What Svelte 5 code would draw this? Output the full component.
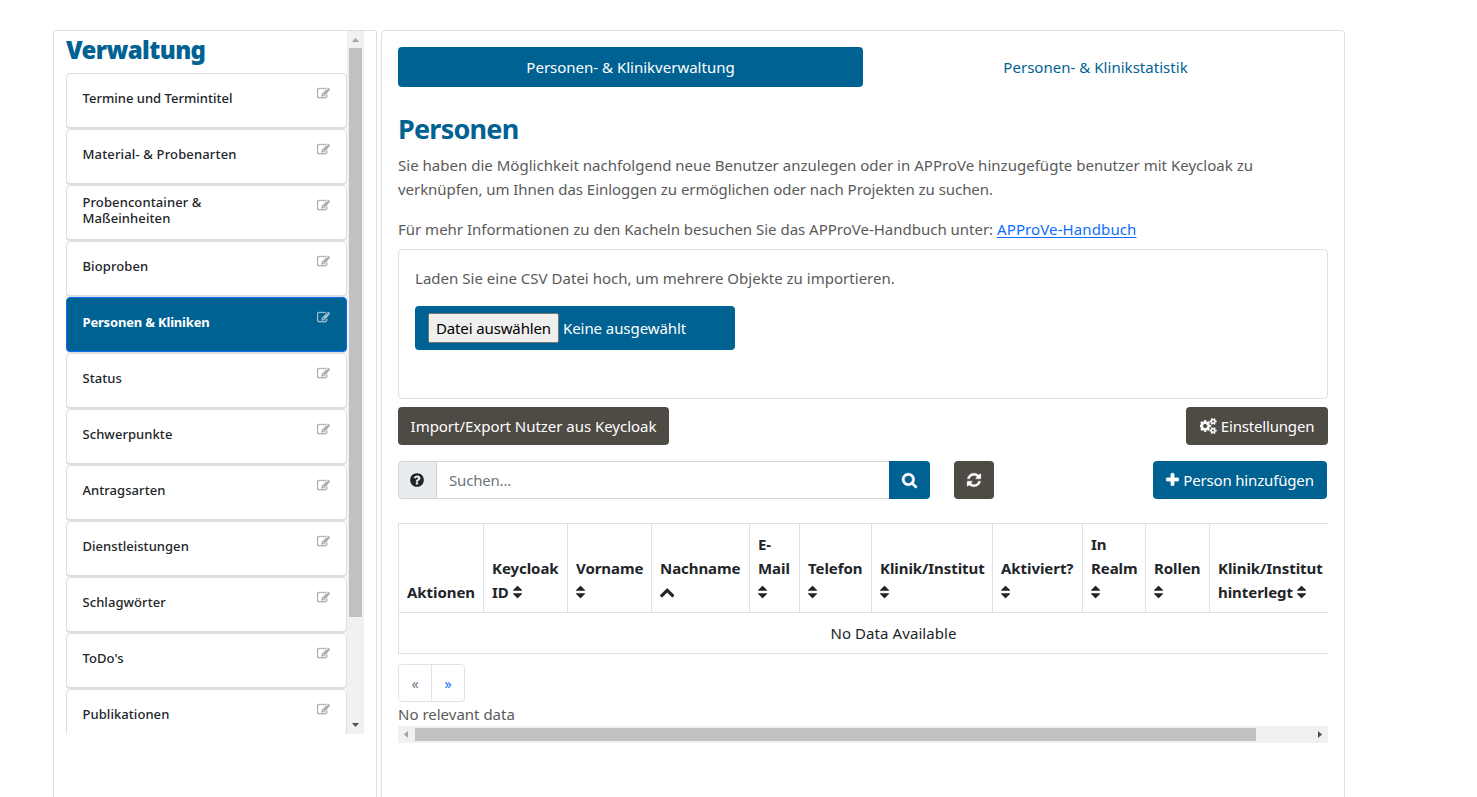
<script>
  const items = [
    { label: 'Termine und Termintitel', ls: 0.01 },
    { label: 'Material- & Probenarten', ls: 0.15 },
    { label: 'Probencontainer & Maßeinheiten', ls: 0.1 },
    { label: 'Bioproben', ls: 0.1 },
    { label: 'Personen & Kliniken', ls: -0.18, active: true },
    { label: 'Status', ls: 0.06 },
    { label: 'Schwerpunkte', ls: 0.06 },
    { label: 'Antragsarten', ls: 0.06 },
    { label: 'Dienstleistungen', ls: 0.04 },
    { label: 'Schlagwörter', ls: 0.06 },
    { label: "ToDo's", ls: 0.06 },
    { label: 'Publikationen', ls: 0.06 },
  ];

  const columns = [
    { lines: ['Aktionen'], width: 85 },
    { lines: ['Keycloak', 'ID'], width: 84, sort: 'both', inline: true },
    { lines: ['Vorname'], width: 84, sort: 'both' },
    { lines: ['Nachname'], width: 98, sort: 'up' },
    { lines: ['E-', 'Mail'], width: 50, sort: 'both' },
    { lines: ['Telefon'], width: 72, sort: 'both' },
    { lines: ['Klinik/Institut'], width: 121, sort: 'both' },
    { lines: ['Aktiviert?'], width: 90, sort: 'both' },
    { lines: ['In', 'Realm'], width: 63, sort: 'both' },
    { lines: ['Rollen'], width: 64, sort: 'both' },
    { lines: ['Klinik/Institut', 'hinterlegt'], width: 122, sort: 'both', inline: true },
    { lines: [], width: 57 },
  ];

  const icons = {
    edit: ['0 0 1792 1792', 'M888 1184l116-116-152-152-116 116v56h96v96h56zm440-720q-16-16-33 1l-350 350q-17 17-1 33t33-1l350-350q17-17 1-33zm80 594v190q0 119-84.5 203.5t-203.5 84.5h-832q-119 0-203.5-84.5t-84.5-203.5v-832q0-119 84.5-203.5t203.5-84.5h832q63 0 117 25 15 7 18 23 3 17-9 29l-49 49q-14 14-32 8-23-6-45-6h-832q-66 0-113 47t-47 113v832q0 66 47 113t113 47h832q66 0 113-47t47-113v-126q0-13 9-22l64-64q15-15 35-7t20 29zm-96-738l288 288-672 672h-288v-288zm444 132l-92 92-288-288 92-92q28-28 68-28t68 28l152 152q28 28 28 68t-28 68z'],
    search: ['64 0 1664 1792', 'M1216 832q0-185-131.5-316.5t-316.5-131.5-316.5 131.5-131.5 316.5 131.5 316.5 316.5 131.5 316.5-131.5 131.5-316.5zm512 832q0 52-38 90t-90 38q-54 0-90-38l-343-342q-179 124-399 124-143 0-273.5-55.5t-225-150-150-225-55.5-273.5 55.5-273.5 150-225 225-150 273.5-55.5 273.5 55.5 225 150 150 225 55.5 273.5q0 220-124 399l343 343q37 37 37 90z'],
    refresh: ['128 0 1536 1792', 'M1639 1056q0 5-1 7-64 268-268 434.5t-478 166.5q-146 0-282.5-55t-243.5-157l-129 129q-19 19-45 19t-45-19-19-45v-448q0-26 19-45t45-19h448q26 0 45 19t19 45-19 45l-137 137q71 66 161 102t187 36q134 0 250-65t186-179q11-17 53-117 8-23 30-23h192q13 0 22.5 9.5t9.5 22.5zm25-800v448q0 26-19 45t-45 19h-448q-26 0-45-19t-19-45 19-45l138-138q-148-137-349-137-134 0-250 65t-186 179q-11 17-53 117-8 23-30 23h-199q-13 0-22.5-9.5t-9.5-22.5v-7q65-268 270-434.5t480-166.5q146 0 284 55.5t245 156.5l130-129q19-19 45-19t45 19 19 45z'],
    plus: ['192 0 1408 1792', 'M1600 736v192q0 40-28 68t-68 28h-416v416q0 40-28 68t-68 28h-192q-40 0-68-28t-28-68v-416h-416q-40 0-68-28t-28-68v-192q0-40 28-68t68-28h416v-416q0-40 28-68t68-28h192q40 0 68 28t28 68v416h416q40 0 68 28t28 68z'],
    question: ['128 0 1536 1792', 'M1024 1376v-192q0-14-9-23t-23-9h-192q-14 0-23 9t-9 23v192q0 14 9 23t23 9h192q14 0 23-9t9-23zm256-672q0-88-55.5-163t-138.5-116-170-41q-243 0-371 213-15 24 8 42l132 100q7 6 19 6 16 0 25-12 53-68 86-92 34-24 86-24 48 0 85.5 26t37.5 59q0 38-20 61t-68 45q-63 28-115.5 86.5t-52.5 125.5v36q0 14 9 23t23 9h192q14 0 23-9t9-23q0-19 21.5-49.5t54.5-49.5q32-18 49-28.5t46-35 44.5-48 28-60.5 12.5-81zm384 192q0 209-103 385.5t-279.5 279.5-385.5 103-385.5-103-279.5-279.5-103-385.5 103-385.5 279.5-279.5 385.5-103 385.5 103 279.5 279.5 103 385.5z'],
    cogs: ['0 0 1920 1792', 'M832 896q0-106-75-181t-181-75-181 75-75 181 75 181 181 75 181-75 75-181zm768 512q0-52-38-90t-90-38-90 38-38 90q0 53 37.5 90.5t90.5 37.5 90.5-37.5 37.5-90.5zm0-1024q0-52-38-90t-90-38-90 38-38 90q0 53 37.5 90.5t90.5 37.5 90.5-37.5 37.5-90.5zm-384 421v185q0 10-7 19.5t-16 10.5l-155 24q-11 35-32 76 34 48 90 115 7 11 7 20 0 12-7 19-23 30-82.5 89.5t-78.5 59.5q-11 0-21-7l-115-90q-37 19-77 31-11 108-23 155-7 24-30 24h-186q-11 0-20-7.5t-10-17.5l-23-153q-34-10-75-31l-118 89q-7 7-20 7-11 0-21-8-144-133-144-160 0-9 7-19 10-14 41-53t47-61q-23-44-35-82l-152-24q-10-1-17-9.5t-7-19.5v-185q0-10 7-19.5t16-10.5l155-24q11-35 32-76-34-48-90-115-7-11-7-20 0-12 7-20 22-30 82-89t79-59q11 0 21 7l115 90q34-18 77-32 11-108 23-154 7-24 30-24h186q11 0 20 7.5t10 17.5l23 153q34 10 75 31l118-89q8-7 20-7 11 0 21 8 144 133 144 160 0 8-7 19-12 16-42 54t-45 60q23 48 34 82l152 23q10 2 17 10.5t7 19.5zm640 533v140q0 16-149 31-12 27-30 52 51 113 51 138 0 4-4 7-122 71-124 71-8 0-46-47t-52-68q-20 2-30 2t-30-2q-14 21-52 68t-46 47q-2 0-124-71-4-3-4-7 0-25 51-138-18-25-30-52-149-15-149-31v-140q0-16 149-31 13-29 30-52-51-113-51-138 0-4 4-7 4-2 35-20t59-34 30-16q8 0 46 46.5t52 67.5q20-2 30-2t30 2q51-71 92-112l6-2q4 0 124 70 4 3 4 7 0 25-51 138 17 23 30 52 149 15 149 31zm0-1024v140q0 16-149 31-12 27-30 52 51 113 51 138 0 4-4 7-122 71-124 71-8 0-46-47t-52-68q-20 2-30 2t-30-2q-14 21-52 68t-46 47q-2 0-124-71-4-3-4-7 0-25 51-138-18-25-30-52-149-15-149-31v-140q0-16 149-31 13-29 30-52-51-113-51-138 0-4 4-7 4-2 35-20t59-34 30-16q8 0 46 46.5t52 67.5q20-2 30-2t30 2q51-71 92-112l6-2q4 0 124 70 4 3 4 7 0 25-51 138 17 23 30 52 149 15 149 31z'],
    up: ['89 0 1614 1792', 'M1683 1331l-166 165q-19 19-45 19t-45-19l-531-531-531 531q-19 19-45 19t-45-19l-166-165q-19-19-19-45.5t19-45.5l742-741q19-19 45-19t45 19l742 741q19 19 19 45.5t-19 45.5z'],
    both: ['384 0 1024 1792', 'M1408 1088q0 26-19 45l-448 448q-19 19-45 19t-45-19l-448-448q-19-19-19-45t19-45 45-19h896q26 0 45 19t19 45zm0-384q0 26-19 45t-45 19h-896q-26 0-45-19t-19-45 19-45l448-448q19-19 45-19t45 19l448 448q19 19 19 45z'],
  };
</script>

{#snippet icon(name)}
  <svg class="icon {name}" viewBox={icons[name][0]} aria-hidden="true"><path d={icons[name][1]} /></svg>
{/snippet}

<div class="page">
  <aside class="sidebar">
    <div class="scroller">
      <div class="list">
        <h1>Verwaltung</h1>
        {#each items as item}
          <div class="item" class:active={item.active}>
            <span class="label" style="letter-spacing: {item.ls}px">{item.label}</span>
            {@render icon('edit')}
          </div>
        {/each}
      </div>
      <div class="vbar">
        <svg class="arrow" viewBox="0 0 17 17"><path d="M5 11h7L8.500 7z" fill="#a3a3a3" /></svg>
        <div class="vthumb"></div>
        <svg class="arrow end" viewBox="0 0 17 17"><path d="M5 6h7L8.500 10z" fill="#505050" /></svg>
      </div>
    </div>
  </aside>

  <main>
    <nav class="tabs">
      <div class="tab on">Personen- &amp; Klinikverwaltung</div>
      <div class="tab">Personen- &amp; Klinikstatistik</div>
    </nav>

    <h2>Personen</h2>
    <p class="intro"><span class="l1">Sie haben die Möglichkeit nachfolgend neue Benutzer anzulegen oder in APProVe hinzugefügte benutzer mit Keycloak zu</span><br /><span class="l2">verknüpfen, um Ihnen das Einloggen zu ermöglichen oder nach Projekten zu suchen.</span></p>
    <p class="more">Für mehr Informationen zu den Kacheln besuchen Sie das APProVe-Handbuch unter: <a href="#handbuch">APProVe-Handbuch</a></p>

    <section class="upload">
      <p>Laden Sie eine CSV Datei hoch, um mehrere Objekte zu importieren.</p>
      <div class="file"><span class="choose">Datei auswählen</span><span class="none">Keine ausgewählt</span></div>
    </section>

    <div class="row">
      <div class="btn dark import">Import/Export Nutzer aus Keycloak</div>
      <div class="btn dark settings">{@render icon('cogs')}<span>Einstellungen</span></div>
    </div>

    <div class="row tools">
      <div class="group">
        <div class="addon">{@render icon('question')}</div>
        <div class="input">Suchen...</div>
        <div class="find">{@render icon('search')}</div>
      </div>
      <div class="btn dark reload">{@render icon('refresh')}</div>
      <div class="btn blue add">{@render icon('plus')}<span>Person hinzufügen</span></div>
    </div>

    <div class="tablewrap">
      <table>
        <colgroup>{#each columns as c}<col style="width: {c.width}px" />{/each}</colgroup>
        <thead>
          <tr>
            {#each columns as c}
              <th>
                {#each c.lines as line, i}<span>{line}</span>{#if i < c.lines.length - 1}<br />{/if}{/each}
                {#if c.sort}{#if !c.inline}<br />{/if}{@render icon(c.sort)}{/if}
              </th>
            {/each}
          </tr>
        </thead>
        <tbody><tr><td colspan="12">No Data Available</td></tr></tbody>
      </table>
    </div>

    <div class="pager"><span class="off">«</span><span>»</span></div>
    <div class="status">No relevant data</div>
    <div class="hbar">
      <svg class="arrow" viewBox="0 0 17 17"><path d="M10 5v7L6 8.500z" fill="#a3a3a3" /></svg>
      <div class="hthumb"></div>
      <svg class="arrow end" viewBox="0 0 17 17"><path d="M7 5v7l4-3.500z" fill="#505050" /></svg>
    </div>
  </main>
</div>

<style>
  :global(body) {
    margin: 0;
    background: #fff;
    overflow: hidden;
  }
  .page, .page * { box-sizing: border-box; }
  .page {
    display: flex;
    gap: 4px;
    height: 797px;
    padding: 30px 0 0 53px;
    overflow: hidden;
    font-family: 'Noto Sans', sans-serif;
    font-size: 15px;
    line-height: 24px;
    color: #5a5a5a;
    white-space: nowrap;
  }
  h1, h2, p { margin: 0; }
  .icon { display: block; height: 16px; fill: currentColor; flex: none; }

  .sidebar {
    width: 324px;
    height: 800px;
    padding-left: 12px;
    border: 1px solid #dfdfe3;
    border-radius: 2px 2px 0 0;
  }
  .scroller { display: flex; width: 298px; height: 703px; overflow: hidden; }
  .list { width: 281px; }
  h1 {
    height: 42px;
    font-size: 24px;
    font-weight: 900;
    line-height: 37px;
    letter-spacing: -0.6px;
    color: #006292;
  }
  .item {
    display: flex;
    justify-content: space-between;
    height: 55px;
    margin-bottom: 1px;
    padding: 0 16px;
    border: 1px solid #dfdfe1;
    border-radius: 4px;
    box-shadow: 0 1px 0 #dfe0e3;
    background: #fff;
    color: #212529;
    font-size: 13px;
    font-weight: 500;
    line-height: 16px;
  }
  .label { align-self: center; width: 170px; margin: -5px 0 0 -0.5px; white-space: normal; }
  .item .edit {
    width: 13px;
    height: 13px;
    margin-top: 13px;
    color: #a3a5a7;
    stroke: currentColor;
    stroke-width: 40;
  }
  .item.active { background: #006292; border-color: #0d6efd; color: #fff; font-weight: 700; }
  .item.active .edit { color: #b5cad6; }
  .vbar { display: flex; flex-direction: column; align-items: center; width: 17px; background: #f1f1f1; }
  .arrow { display: block; width: 17px; height: 17px; flex: none; }
  .vthumb { width: 13px; height: 569px; background: #c1c1c1; }
  .vbar .end { margin-top: auto; }

  main {
    width: 964px;
    height: 800px;
    padding: 16px;
    border: 1px solid #dfdfdf;
    border-radius: 4px;
  }
  .tabs { display: flex; }
  .tab {
    flex: 1;
    height: 40px;
    line-height: 41px;
    text-align: center;
    color: #006292;
    border-radius: 4px;
    letter-spacing: 0.03px;
  }
  .tab.on { background: #006292; color: #fff; letter-spacing: 0; }
  h2 {
    margin-top: 25px;
    height: 41px;
    font-size: 27px;
    line-height: 34px;
    font-weight: 700;
    letter-spacing: -0.76px;
    color: #006292;
  }
  .l1 { letter-spacing: 0.02px; }
  .l2 { letter-spacing: -0.048px; }
  .more { margin-top: 16px; height: 32px; letter-spacing: -0.01px; }
  .more a { color: #0d6efd; letter-spacing: 0.11px; text-decoration: underline; text-underline-offset: 2px; }
  .upload { height: 150px; padding: 16px; border: 1px solid #dfdfdf; border-radius: 4px; }
  .upload p { letter-spacing: 0.02px; }
  .file {
    display: flex;
    align-items: center;
    width: 320px;
    height: 44px;
    margin-top: 16px;
    padding-left: 13px;
    border-radius: 4px;
    background: #006292;
    color: #fff;
  }
  .choose {
    width: 131px;
    height: 30px;
    line-height: 29px;
    margin-right: 4px;
    text-align: center;
    border: 1px solid #767676;
    border-radius: 2px;
    background: #efefef;
    color: #000;
    letter-spacing: -0.13px;
  }
  .none { letter-spacing: -0.07px; }
  .row { display: flex; justify-content: space-between; margin-top: 8px; }
  .tools { margin-top: 16px; padding-right: 1px; justify-content: flex-start; }
  .btn {
    display: flex;
    align-items: center;
    justify-content: center;
    height: 38px;
    border-radius: 4px;
    color: #fff;
  }
  .dark { background: #4e4a44; }
  .blue { background: #006292; }
  .import { width: 271px; letter-spacing: -0.03px; }
  .settings { width: 142px; gap: 4px; letter-spacing: -0.18px; }
  .cogs { width: 17.140px; stroke: currentColor; stroke-width: 30; }
  .group { display: flex; width: 532px; height: 38px; }
  .addon {
    display: flex;
    align-items: center;
    justify-content: center;
    width: 39px;
    padding-right: 1px;
    border: 1px solid #ced4da;
    border-radius: 4px 0 0 4px;
    background: #e9ecef;
    color: #212529;
  }
  .question { width: 14px; }
  .input {
    width: 452px;
    padding-left: 12px;
    line-height: 37px;
    border: solid #ced4da;
    border-width: 1px 0;
    color: #6c757d;
    letter-spacing: -0.19px;
  }
  .find {
    display: flex;
    align-items: center;
    justify-content: center;
    width: 41px;
    border-radius: 0 4px 4px 0;
    background: #006292;
    color: #fff;
  }
  .search { width: 15px; stroke: currentColor; stroke-width: 60; overflow: visible; }
  .reload { width: 40px; margin-left: 24px; }
  .refresh { width: 14px; stroke: currentColor; stroke-width: 40; overflow: visible; }
  .add { width: 174px; margin-left: auto; gap: 4px; letter-spacing: -0.16px; }
  .plus { width: 13px; stroke: currentColor; stroke-width: 40; overflow: visible; }

  .tablewrap { margin-top: 24px; height: 141px; overflow: hidden; }
  table { width: 991px; table-layout: fixed; border-collapse: collapse; color: #212529; }
  th {
    height: 89px;
    padding: 8px 0 8px 8px;
    border: 1px solid #dee2e6;
    text-align: left;
    vertical-align: bottom;
    letter-spacing: -0.06px;
  }
  th .icon { display: inline-block; vertical-align: -2px; }
  .both { width: 9.140px; }
  .up { width: 14.400px; }
  td { height: 41px; padding: 0; border: 1px solid #dee2e6; text-align: center; letter-spacing: 0.08px; }
  .pager {
    display: flex;
    width: 67px;
    height: 38px;
    margin-top: 0;
    border: 1px solid #dee2e6;
    border-radius: 4px;
    color: #0d6efd;
    font-size: 14px;
    line-height: 37px;
    text-align: center;
  }
  .pager span { flex: 1; }
  .pager .off { color: #6c757d; border-right: 1px solid #dee2e6; }
  .status { height: 24px; }
  .hbar { display: flex; align-items: center; height: 17px; background: #f1f1f1; }
  .hthumb { width: 841px; height: 13px; background: #c1c1c1; }
  .hbar .end { margin-left: auto; }
</style>
